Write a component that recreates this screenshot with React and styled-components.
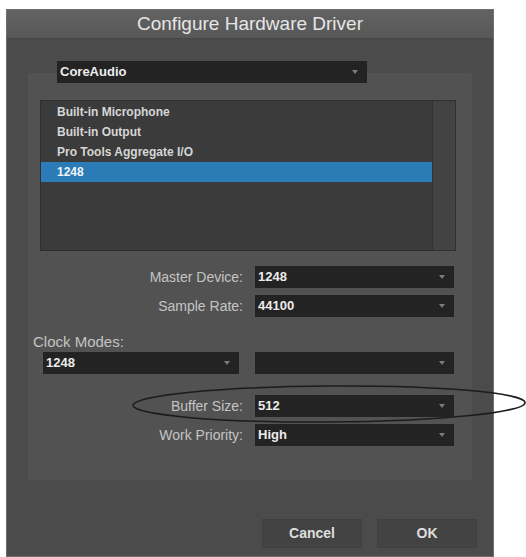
import styled, { createGlobalStyle } from "styled-components";

const GlobalStyle = createGlobalStyle`
  html, body {
    margin: 0;
    padding: 0;
    background: #ffffff;
  }
  body {
    font-family: "Liberation Sans", Arial, sans-serif;
  }
`;

const devices = [
  "Built-in Microphone",
  "Built-in Output",
  "Pro Tools Aggregate I/O",
  "1248",
];

function App() {
  return (
    <Page>
      <GlobalStyle />
      <Window>
        <TitleBar>Configure Hardware Driver</TitleBar>
        <Body>
          <Select width="310px" left="50px">
            CoreAudio
          </Select>
          <Panel>
            <DeviceList>
              <Rows>
                {devices.map((name) => (
                  <Row key={name} selected={name === "1248"}>
                    {name}
                  </Row>
                ))}
              </Rows>
              <ScrollTrack />
            </DeviceList>

            <FormRow gap="15px">
              <Label>Master Device:</Label>
              <Select width="199px">1248</Select>
            </FormRow>
            <FormRow gap="7px">
              <Label>Sample Rate:</Label>
              <Select width="199px">44100</Select>
            </FormRow>

            <SectionLabel>Clock Modes:</SectionLabel>
            <ClockRow>
              <Select width="196px">1248</Select>
              <Select width="199px" />
            </ClockRow>

            <FormRow gap="21px">
              <Label>Buffer Size:</Label>
              <Select width="199px">512</Select>
            </FormRow>
            <FormRow gap="7px">
              <Label>Work Priority:</Label>
              <Select width="199px">High</Select>
            </FormRow>
          </Panel>
          <Buttons>
            <Button>Cancel</Button>
            <Button>OK</Button>
          </Buttons>
        </Body>
      </Window>
      <Marker viewBox="0 0 526 557" width="526" height="557">
        <ellipse
          cx="329"
          cy="404"
          rx="196"
          ry="18"
          fill="none"
          stroke="#1c1c1c"
          strokeWidth="1.6"
          transform="rotate(-0.4 329 404)"
        />
      </Marker>
    </Page>
  );
}

export default App;

const Page = styled.div`
  position: relative;
  width: 526px;
  height: 557px;
  overflow: hidden;
  padding: 9px 0 0 6px;
  box-sizing: border-box;
`;

const Window = styled.div`
  width: 488px;
  height: 548px;
  box-sizing: border-box;
  border: 1px solid #6e6e6e;
  background: #4b4b4b;
  display: flex;
  flex-direction: column;
`;

const TitleBar = styled.div`
  height: 28px;
  border-bottom: 1px solid #474747;
  background: linear-gradient(#626262, #585858);
  color: #e6e6e6;
  font-size: 19px;
  line-height: 28px;
  text-align: center;
`;

const Body = styled.div`
  display: flex;
  flex-direction: column;
  padding: 22px 0 0 0;
`;

const Select = styled.div`
  position: relative;
  z-index: 1;
  box-sizing: border-box;
  width: ${(p) => p.width};
  margin-left: ${(p) => p.left || "0"};
  height: 22px;
  padding-left: 3px;
  background: #232323;
  color: #ececec;
  font-size: 13px;
  font-weight: bold;
  line-height: 22px;
  flex-shrink: 0;

  &::after {
    content: "";
    position: absolute;
    right: 9px;
    top: 9px;
    border-left: 3.5px solid transparent;
    border-right: 3.5px solid transparent;
    border-top: 4px solid #7c7c7c;
  }
`;

const Panel = styled.div`
  margin: -10px 0 0 21px;
  width: 444px;
  height: 407px;
  box-sizing: border-box;
  background: #525252;
  border-radius: 3px;
  display: flex;
  flex-direction: column;
  padding-top: 27px;
`;

const DeviceList = styled.div`
  margin-left: 12px;
  width: 416px;
  height: 151px;
  box-sizing: border-box;
  border: 1px solid #303030;
  background: #3b3b3b;
  display: flex;
`;

const Rows = styled.div`
  flex: 1;
  padding-top: 1px;
  display: flex;
  flex-direction: column;
`;

const Row = styled.div`
  height: 20px;
  line-height: 20px;
  padding-left: 16px;
  font-size: 12px;
  font-weight: bold;
  color: ${(p) => (p.selected ? "#eef4fa" : "#d6d6d6")};
  background: ${(p) => (p.selected ? "#2b7cb6" : "transparent")};
`;

const ScrollTrack = styled.div`
  width: 22px;
  background: #434343;
  border-left: 1px solid #333333;
`;

const FormRow = styled.div`
  margin-top: ${(p) => p.gap};
  display: flex;
  justify-content: flex-end;
  align-items: center;
  padding-right: 18px;
`;

const Label = styled.span`
  margin-right: 12px;
  color: #c4c4c4;
  font-size: 14px;
`;

const SectionLabel = styled.div`
  margin: 18px 0 0 5px;
  height: 14px;
  line-height: 14px;
  color: #c4c4c4;
  font-size: 15px;
`;

const ClockRow = styled.div`
  margin: 3px 0 0 15px;
  display: flex;
  gap: 16px;
`;

const Buttons = styled.div`
  margin-top: 39px;
  padding-right: 16px;
  display: flex;
  justify-content: flex-end;
  gap: 15px;
`;

const Button = styled.div`
  width: 100px;
  height: 29px;
  box-sizing: border-box;
  border: 1px solid #3f3f3f;
  background: #434343;
  color: #dedede;
  font-size: 14px;
  font-weight: bold;
  line-height: 27px;
  text-align: center;
`;

const Marker = styled.svg`
  position: absolute;
  left: 0;
  top: 0;
  pointer-events: none;
`;
